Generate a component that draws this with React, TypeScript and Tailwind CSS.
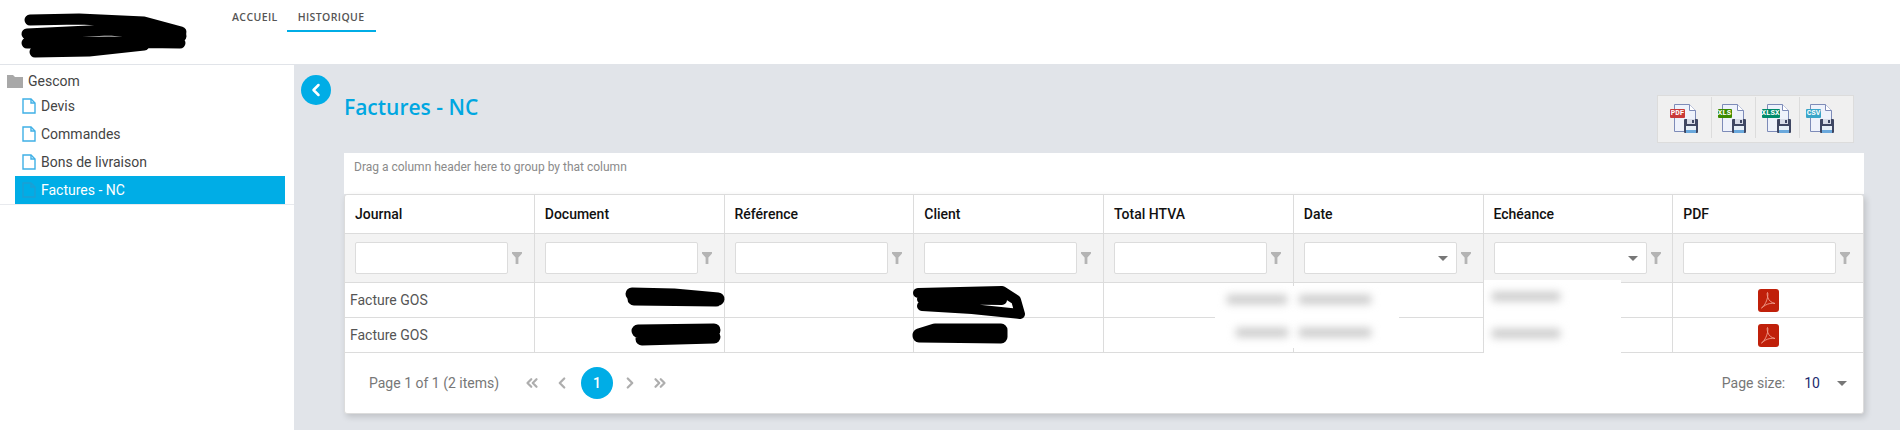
import { ChevronLeft, ChevronRight, ChevronsLeft, ChevronsRight } from "lucide-react";

const columns = ["Journal", "Document", "Référence", "Client", "Total HTVA", "Date", "Echéance", "PDF"];
const menu = ["Devis", "Commandes", "Bons de livraison"];

function FileIcon({ active }: { active?: boolean }) {
  const color = active ? "#1c9fd4" : "#3fb0e6";
  return (
    <svg width="14" height="16" viewBox="0 0 14 16" fill="none" stroke={color} strokeWidth="1.4">
      <path d="M1 1h8l4 4v10H1z" />
      <path d="M9 1v4h4" />
    </svg>
  );
}

function FunnelIcon() {
  return (
    <svg width="10" height="12" viewBox="0 0 10 12" fill="#b4b4b4" className="shrink-0">
      <path d="M0 0h10v1.600L6.400 5.600V12H3.600V5.600L0 1.600z" />
    </svg>
  );
}

function CaretDown({ className }: { className: string }) {
  return (
    <svg width="10" height="5" viewBox="0 0 10 5" className={className}>
      <path d="M0 0h10L5 5z" fill="#777" />
    </svg>
  );
}

function ExportIcon({ label, color, badgeWidth, docLeft }: { label: string; color: string; badgeWidth: string; docLeft: number }) {
  return (
    <div className="relative w-[32px] h-[30px] mt-[3px]">
      <svg width="32" height="30" viewBox="0 0 32 30" className="absolute left-0 top-0">
        <g transform={`translate(${docLeft} 0)`}>
          <path d="M.5 .5h15l6 6v21H.5z" fill="#eef2fb" stroke="#7d8bb8" />
          <path d="M15.500 .5v6h6" fill="#fff" stroke="#7d8bb8" />
          <rect x="10" y="15" width="14" height="14" rx="1" fill="#3f4763" />
          <rect x="13" y="15" width="8" height="5" fill="#d8dce8" />
          <rect x="18" y="16" width="2" height="3" fill="#3f4763" />
          <rect x="12" y="22" width="10" height="4" fill="#e8f0f8" />
          <rect x="12" y="26" width="10" height="3" fill="#6aa8dc" />
        </g>
      </svg>
      <div
        className={`absolute left-0 top-[5px] h-[9px] ${badgeWidth} rounded-[1px] text-white text-[7.5px] leading-[9px] font-bold text-center font-['Liberation_Mono',monospace]`}
        style={{ backgroundColor: color }}
      >
        {label}
      </div>
    </div>
  );
}

function PdfIcon() {
  return (
    <svg width="21" height="23" viewBox="0 0 21 23">
      <rect width="21" height="23" rx="3" fill="#c0200a" />
      <path
        d="M3.500 19c2.500-1.500 5-6 6-10.500C10 6 10 4 9.500 3.500 9 4 9 6.500 10 9c1 2.500 3 4.500 7 5.500-3-.5-8-.5-13.500 4.500z"
        fill="none"
        stroke="#f0a090"
        strokeWidth=".9"
      />
    </svg>
  );
}

function Scribble({ className, width, height, d, stroke }: { className: string; width: number; height: number; d: string; stroke: number }) {
  return (
    <svg width={width} height={height} viewBox={`0 0 ${width} ${height}`} className={`absolute ${className}`}>
      <path d={d} fill="none" stroke="#000" strokeWidth={stroke} strokeLinecap="round" strokeLinejoin="round" />
    </svg>
  );
}

export default function App() {
  return (
    <div className="w-[1900px] h-[430px] overflow-hidden bg-[#e1e4e9] font-['Roboto',sans-serif] flex flex-col">
      <header className="relative h-[65px] shrink-0 bg-white border-b border-[#e1e4e9] flex">
        <Scribble
          className="left-[19px] top-[12px]"
          width={170}
          height={48}
          stroke={11}
          d="M11 8 L60 7 L125 10 L162 20 M8 22 L90 18 L162 24 M8 31 L90 30 L161 31 M16 40 L70 39 L125 33"
        />
        <nav className="ml-[222px] flex font-['Open_Sans',sans-serif] text-[10.5px] font-semibold tracking-[0.4px] text-[#555]">
          <a className="h-[32px] pl-[10px] pr-[9px] pt-[9px] leading-[16px]">ACCUEIL</a>
          <a className="h-[32px] px-[11px] pt-[9px] leading-[16px] border-b-2 border-[#00ade6]">HISTORIQUE</a>
        </nav>
      </header>

      <div className="flex flex-1 min-h-0">
        <aside className="w-[294px] shrink-0 bg-white text-[14px] text-[#444]">
          <div className="border-b border-[#e8eaee] h-[140px] pt-[5px]">
            <div className="flex items-center h-[22px] pl-[7px] gap-[5px]">
              <svg width="16" height="13" viewBox="0 0 16 13" fill="#a8a8a8">
                <path d="M0 0h6l2 2h8v11H0z" />
              </svg>
              <span>Gescom</span>
            </div>
            <div className="ml-[15px] mr-[9px]">
              {menu.map((item) => (
                <div key={item} className="flex items-center h-[28px] pl-[7px] gap-[5px]">
                  <FileIcon />
                  <span>{item}</span>
                </div>
              ))}
              <div className="flex items-center h-[28px] pl-[7px] gap-[5px] bg-[#00ade6] text-white">
                <FileIcon active />
                <span>Factures - NC</span>
              </div>
            </div>
          </div>
        </aside>

        <main className="relative flex-1 pl-[50px] pr-[36px] pt-[30px]">
          <button className="absolute left-[7px] top-[10px] w-[30px] h-[30px] rounded-full bg-[#00ade6] flex items-center justify-center text-white">
            <ChevronLeft size={20} strokeWidth={3} />
          </button>

          <div className="flex justify-between items-start">
            <h1 className="-mt-[1px] font-['Open_Sans',sans-serif] text-[21px] leading-[26px] font-semibold text-[#00a7e1]">Factures - NC</h1>
            <div className="mr-[10px] h-[48px] flex bg-[#f0f0f0] border border-[#dcdcdc] pt-[1px] pb-[4px]">
              <div className="w-[54px] border-r border-[#dcdcdc] flex items-center justify-end pr-[9px]">
                <ExportIcon label="PDF" color="#c93a3a" badgeWidth="w-[15px]" docLeft={4} />
              </div>
              <div className="w-[44px] border-r border-[#dcdcdc] flex items-center justify-center">
                <ExportIcon label="XLS" color="#3a8a00" badgeWidth="w-[14px]" docLeft={4} />
              </div>
              <div className="w-[44px] border-r border-[#dcdcdc] flex items-center justify-center">
                <ExportIcon label="XLSX" color="#008a6a" badgeWidth="w-[18px]" docLeft={5} />
              </div>
              <div className="w-[53px] flex items-center pl-[6px]">
                <ExportIcon label="CSV" color="#3aa5c8" badgeWidth="w-[15px]" docLeft={4} />
              </div>
            </div>
          </div>

          <div className="mt-[10px] bg-white h-[41px] pl-[10px] pt-[5px] text-[12px] leading-[18px] text-[#8a8a8a]">
            Drag a column header here to group by that column
          </div>

          <div className="relative w-[1520px] bg-white border border-[#dcdcdc] rounded-[3px] shadow-[2px_3px_6px_rgba(0,0,0,0.15)]">
            <div className="grid grid-cols-8 h-[39px] border-b border-[#dcdcdc]">
              {columns.map((c) => (
                <div key={c} className="border-r border-[#dcdcdc] last:border-r-0 pl-[10px] flex items-center text-[14px] font-medium text-[#111]">
                  {c}
                </div>
              ))}
            </div>

            <div className="grid grid-cols-8 h-[49px] bg-[#f3f3f3] border-b border-[#dcdcdc]">
              {columns.map((c) => (
                <div key={c} className="relative border-r border-[#dcdcdc] last:border-r-0 pl-[10px] flex items-center gap-[4px]">
                  <div className="relative w-[153px] h-[32px] bg-white border border-[#dcdcdc] rounded-[2px] shrink-0">
                    {(c === "Date" || c === "Echéance") && <CaretDown className="absolute right-[8px] top-[13px]" />}
                  </div>
                  <FunnelIcon />
                </div>
              ))}
            </div>

            {[0, 1].map((row) => (
              <div key={row} className="grid grid-cols-8 h-[35px] border-b border-[#dcdcdc]">
                {columns.map((c, i) => (
                  <div key={c} className="border-r border-[#dcdcdc] last:border-r-0 flex items-center justify-center">
                    {i === 0 && <span className="w-full pl-[5px] text-[14px] text-[#555]">Facture GOS</span>}
                    {c === "PDF" && <PdfIcon />}
                  </div>
                ))}
              </div>
            ))}

            <div className="h-[60px] flex items-center justify-between pl-[24px] pr-[16px] text-[14px] text-[#777]">
              <div className="flex items-center">
                <span>Page 1 of 1 (2 items)</span>
                <div className="ml-[24px] flex items-center text-[#aeaeae]">
                  <ChevronsLeft size={18} strokeWidth={3} />
                  <ChevronLeft size={18} strokeWidth={3} className="ml-[12px]" />
                  <div className="ml-[10px] w-[32px] h-[32px] rounded-full bg-[#00ade6] text-white flex items-center justify-center font-medium">1</div>
                  <ChevronRight size={18} strokeWidth={3} className="ml-[8px]" />
                  <ChevronsRight size={18} strokeWidth={3} className="ml-[12px]" />
                </div>
              </div>
              <div className="flex items-center">
                <span>Page size:</span>
                <span className="ml-[19px] text-[#1c2a6e]">10</span>
                <CaretDown className="ml-[17px]" />
              </div>
            </div>

            <Scribble className="left-[279px] top-[92px]" width={102} height={22} stroke={13} d="M8 7 L50 8 L94 12 M10 12 L92 13" />
            <Scribble className="left-[285px] top-[127px]" width={92} height={26} stroke={13} d="M8 9 L84 8 M12 17 L84 15" />
            <Scribble className="left-[567px] top-[90px]" width={116} height={36} stroke={10} d="M6 8 L90 6 L104 15 L108 29 L60 24 L10 21 M10 14 L90 15" />
            <Scribble className="left-[566px] top-[128px]" width={100} height={22} stroke={13} d="M8 12 L24 7 L90 7 L90 14 L8 13" />

            <div className="absolute left-[870px] top-[91px] w-[184px] h-[62px] bg-white">
              <div className="absolute left-[12px] top-[9px] w-[60px] h-[9px] bg-[#c9c9c9] blur-[4px]" />
              <div className="absolute left-[84px] top-[9px] w-[72px] h-[9px] bg-[#c9c9c9] blur-[4px]" />
              <div className="absolute left-[21px] top-[42px] w-[52px] h-[9px] bg-[#c9c9c9] blur-[4px]" />
              <div className="absolute left-[84px] top-[42px] w-[72px] h-[9px] bg-[#c9c9c9] blur-[4px]" />
            </div>
            <div className="absolute left-[1139px] top-[85px] w-[137px] h-[73px] bg-white">
              <div className="absolute left-[8px] top-[12px] w-[68px] h-[9px] bg-[#c9c9c9] blur-[4px]" />
              <div className="absolute left-[8px] top-[49px] w-[68px] h-[9px] bg-[#c9c9c9] blur-[4px]" />
            </div>
          </div>
        </main>
      </div>
    </div>
  );
}
